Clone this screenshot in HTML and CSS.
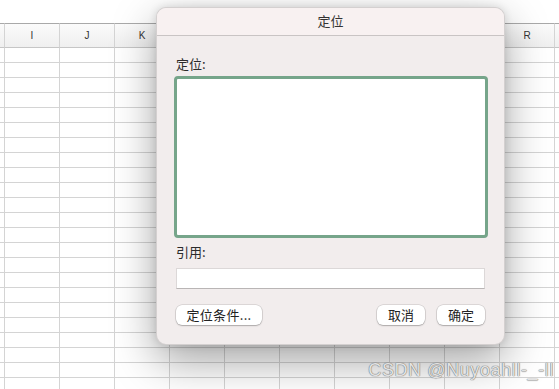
FILE: index.html
```html
<!DOCTYPE html>
<html lang="zh-CN">
<head>
  <meta charset="UTF-8" />
  <meta name="viewport" content="width=device-width, initial-scale=1.0" />
  <title>定位</title>
  <link rel="stylesheet" href="styles.css">
</head>
<body>
  <div class="toolbar"></div>
  <div class="sheet" id="sheet"></div>

  <div class="dialog">
    <div class="dialog-title">定位</div>
    <div class="dialog-body">
      <div class="field-label">定位:</div>
      <div class="goto-list"></div>
      <div class="field-label ref-label">引用:</div>
      <div class="ref-input"></div>
      <div class="button-row">
        <button class="btn btn-special">定位条件...</button>
        <div class="button-group">
          <button class="btn btn-wide">取消</button>
          <button class="btn btn-wide">确定</button>
        </div>
      </div>
    </div>
  </div>

  <div class="watermark">CSDN @Nuyoahll-_-ll</div>

  <script>
    var cols = ['', 'I', 'J', 'K', 'L', 'M', 'N', 'O', 'P', 'Q', 'R', ''];
    var sheet = document.getElementById('sheet');
    var html = '';
    for (var c = 0; c < cols.length; c++) {
      html += '<div class="head-cell">' + cols[c] + '</div>';
    }
    for (var r = 0; r < 23; r++) {
      for (var k = 0; k < cols.length; k++) {
        html += '<div class="cell"></div>';
      }
    }
    sheet.innerHTML = html;
  </script>
</body>
</html>
```

FILE: styles.css
```css
body {
  margin: 0;
  width: 559px;
  height: 389px;
  overflow: hidden;
  background: #fff;
  font-family: "Noto Sans CJK SC", "Noto Sans", sans-serif;
  position: relative;
}
.toolbar {
  height: 23px;
  background: #fff;
}
.sheet {
  display: grid;
  grid-template-columns: 5px repeat(10, 55px) 10px;
  grid-auto-rows: 15px;
  grid-template-rows: 25px;
}
.head-cell {
  box-sizing: border-box;
  border-top: 1px solid #a9a9a9;
  border-bottom: 1px solid #c6c6c6;
  border-right: 1px solid #d4d4d4;
  background: linear-gradient(#fbfbfb, #efefef);
  font-family: "Liberation Sans", sans-serif;
  font-size: 10px;
  color: #333;
  display: flex;
  align-items: center;
  justify-content: center;
}
.cell {
  box-sizing: border-box;
  border-right: 1px solid #d4d4d4;
  border-bottom: 1px solid #d4d4d4;
}
.dialog {
  position: absolute;
  left: 156px;
  top: 7px;
  width: 349px;
  height: 338px;
  box-sizing: border-box;
  border-radius: 10px;
  background: #f2eded;
  border: 1px solid rgba(0, 0, 0, 0.12);
  box-shadow: 0 16px 44px rgba(0, 0, 0, 0.36), 0 0 8px rgba(0, 0, 0, 0.12);
  overflow: hidden;
}
.dialog-title {
  height: 28px;
  box-sizing: border-box;
  background: #f8f1f1;
  border-bottom: 1px solid #c9c4c4;
  text-align: center;
  font-size: 13px;
  line-height: 26px;
  color: #333;
}
.dialog-body {
  padding: 20px 19px 0 19px;
  display: flex;
  flex-direction: column;
}
.field-label {
  font-size: 13px;
  line-height: 16px;
  height: 16px;
  color: #2b2b2b;
}
.goto-list {
  margin: 4px 0 0 -2px;
  width: 314px;
  height: 162px;
  box-sizing: border-box;
  border: 3px solid #76a58a;
  border-radius: 4px;
  background: #fff;
}
.ref-label {
  margin-top: 6px;
}
.ref-input {
  margin-top: 8px;
  width: 309px;
  height: 21px;
  box-sizing: border-box;
  background: #fff;
  border: 1px solid #dcd8d8;
  border-bottom-color: #b9b5b5;
}
.button-row {
  margin-top: 16px;
  display: flex;
  justify-content: space-between;
  width: 309px;
}
.button-group {
  display: flex;
  gap: 12px;
}
.btn {
  height: 20px;
  padding: 0 9px;
  border: none;
  border-radius: 6px;
  background: #fff;
  box-shadow: 0 0 0 0.5px rgba(0, 0, 0, 0.18), 0 1px 1.5px rgba(0, 0, 0, 0.22);
  font-family: "Noto Sans CJK SC", "Noto Sans", sans-serif;
  font-size: 13px;
  line-height: 20px;
  color: #222;
}
.btn-special {
  width: 86px;
  padding: 0;
  letter-spacing: 0.3px;
}
.btn-wide {
  width: 48px;
  padding: 0;
}
.watermark {
  position: absolute;
  right: 5px;
  bottom: 8px;
  font-family: "Liberation Sans", sans-serif;
  font-size: 18px;
  color: #e2e2e2;
  text-shadow: 0 0 1px #6a6a6a, 0 0 1px #6a6a6a;
  letter-spacing: 0.6px;
}
```
